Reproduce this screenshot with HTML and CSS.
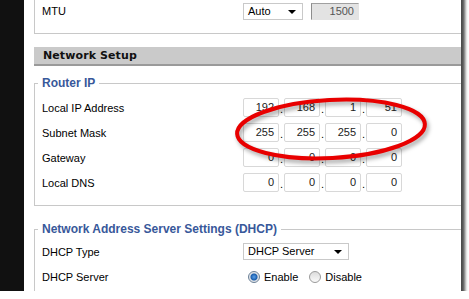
FILE: index.html
```html
<!DOCTYPE html>
<html lang="en">
<head>
    <meta charset="UTF-8" />
    <title>Network Setup</title>
    <link rel="stylesheet" href="styles.css">
</head>
<body>
<div class="shot">
    <div class="side"></div>
    <div class="page">
        <div class="mtu">
            <div class="row">
                <span class="label">MTU</span>
                <div class="select auto">Auto<i class="arrow"></i></div>
                <div class="readonly">1500</div>
            </div>
        </div>

        <div class="bar">Network Setup</div>

        <fieldset class="group">
            <legend>Router IP</legend>
            <div class="row">
                <span class="label">Local IP Address</span>
                <div class="ip"><span class="oct">192</span><span class="sep">.</span><span class="oct">168</span><span class="sep">.</span><span class="oct">1</span><span class="sep">.</span><span class="oct">51</span></div>
            </div>
            <div class="row">
                <span class="label">Subnet Mask</span>
                <div class="ip"><span class="oct">255</span><span class="sep">.</span><span class="oct">255</span><span class="sep">.</span><span class="oct">255</span><span class="sep">.</span><span class="oct">0</span></div>
            </div>
            <div class="row">
                <span class="label">Gateway</span>
                <div class="ip"><span class="oct">0</span><span class="sep">.</span><span class="oct">0</span><span class="sep">.</span><span class="oct">0</span><span class="sep">.</span><span class="oct">0</span></div>
            </div>
            <div class="row">
                <span class="label">Local DNS</span>
                <div class="ip"><span class="oct">0</span><span class="sep">.</span><span class="oct">0</span><span class="sep">.</span><span class="oct">0</span><span class="sep">.</span><span class="oct">0</span></div>
            </div>
        </fieldset>

        <fieldset class="group dhcp">
            <legend>Network Address Server Settings (DHCP)</legend>
            <div class="row">
                <span class="label">DHCP Type</span>
                <div class="select wide">DHCP Server<i class="arrow"></i></div>
            </div>
            <div class="row">
                <span class="label">DHCP Server</span>
                <label class="radio"><i class="knob on"></i>Enable</label>
                <label class="radio"><i class="knob"></i>Disable</label>
            </div>
        </fieldset>

        <svg class="ring" width="200" height="72" viewBox="0 0 200 72">
            <ellipse cx="97" cy="33" rx="94" ry="29" transform="rotate(-3 97 33)" />
        </svg>
    </div>
</div>
</body>
</html>
```

FILE: styles.css
```css
body {
    margin: 0;
    background: #fff;
    overflow: hidden;
    font-family: "Liberation Sans", Arial, sans-serif;
    font-size: 11px;
    color: #000;
}

.shot {
    display: flex;
    width: 471px;
    height: 301px;
    margin: -10px 0 0 -10px;
    box-shadow: 4px 4px 3px rgba(0, 0, 0, 0.7);
}

.side {
    flex: none;
    width: 34px;
    background: #111;
}

.page {
    position: relative;
    flex: 1;
    background: #fff;
    overflow: hidden;
    padding: 10px 0 0 10px;
}

.row {
    display: flex;
    align-items: center;
    height: 25px;
}

.label {
    flex: none;
    width: 201px;
}

.mtu {
    box-sizing: border-box;
    height: 34px;
    margin-right: -20px;
    padding-left: 7px;
    border-left: 1px solid #c8c8c8;
    border-bottom: 1px solid #c8c8c8;
}

.mtu .row {
    height: 22px;
}

.select {
    position: relative;
    box-sizing: border-box;
    height: 17px;
    padding-left: 4px;
    line-height: 15px;
    border: 1px solid #c9c9c9;
}

.select.auto { width: 60px; }
.select.wide { width: 106px; }

.arrow {
    position: absolute;
    right: 6px;
    top: 6px;
    border-left: 4px solid transparent;
    border-right: 4px solid transparent;
    border-top: 4px solid #000;
}

.readonly {
    box-sizing: border-box;
    width: 48px;
    height: 17px;
    margin-left: 8px;
    padding-right: 4px;
    line-height: 15px;
    text-align: right;
    color: #555;
    background: #e3e3e3;
    border: 1px solid #e3e3e3;
    border-left-color: #8d8d8d;
    border-top-color: #a0a0a0;
}

.bar {
    height: 17px;
    margin: 13px -20px 0 0;
    padding-left: 9px;
    background: #cacaca;
    border-bottom: 2px solid #9a9a9a;
    font: bold 11px/17px "DejaVu Sans", Verdana, sans-serif;
    letter-spacing: 0.1px;
    color: #111;
}

.group {
    min-width: 0;
    margin: 10px -20px 0 0;
    padding: 5px 0 10px 3px;
    border: 1px solid #c8c8c8;
}

.group legend {
    padding: 0 4px;
    font-weight: bold;
    font-size: 12px;
    line-height: 14px;
    color: #38589a;
}

.group .row {
    padding-left: 4px;
}

.group.dhcp {
    margin-top: 16px;
    padding-top: 3px;
}

.ip {
    display: flex;
    align-items: flex-end;
}

.oct {
    box-sizing: border-box;
    width: 36px;
    height: 19px;
    padding-right: 4px;
    line-height: 17px;
    text-align: right;
    color: #222;
    border: 1px solid #d8d8d8;
    border-radius: 2px;
}

.sep {
    width: 5px;
    line-height: 16px;
    text-align: center;
}

.radio {
    display: flex;
    align-items: center;
    margin-left: 5px;
    margin-right: 6px;
}

.knob {
    box-sizing: border-box;
    width: 12px;
    height: 12px;
    margin-right: 4px;
    border: 1px solid #9a9a9a;
    border-radius: 50%;
    background: linear-gradient(#dcdcdc, #fafafa);
}

.knob.on {
    border-color: #6a7f96;
    background: radial-gradient(circle, #5aa0e8 0, #1c5fae 3px, #d9dde2 4px, #f7f7f7 6px);
}

.ring {
    position: absolute;
    left: 210px;
    top: 106px;
    overflow: visible;
    filter: drop-shadow(2px 3px 2px rgba(0, 0, 0, 0.35));
}

.ring ellipse {
    fill: none;
    stroke: #e80000;
    stroke-width: 4;
}
```
